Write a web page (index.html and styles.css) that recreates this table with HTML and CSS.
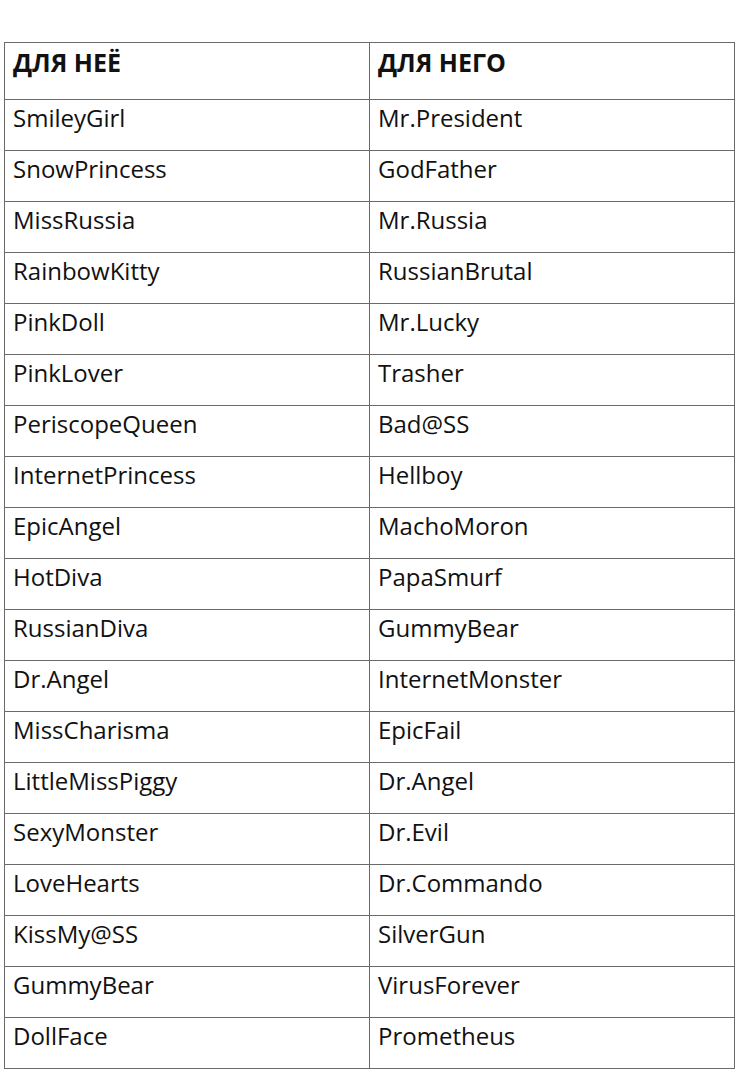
FILE: index.html
```html
<!DOCTYPE html>
<html>
<head>
<meta charset="utf-8">
<link rel="stylesheet" href="styles.css">
</head>
<body>
<table class="names">
  <thead>
    <tr><th>ДЛЯ НЕЁ</th><th>ДЛЯ НЕГО</th></tr>
  </thead>
  <tbody>
    <tr><td>SmileyGirl</td><td>Mr.President</td></tr>
    <tr><td>SnowPrincess</td><td>GodFather</td></tr>
    <tr><td>MissRussia</td><td>Mr.Russia</td></tr>
    <tr><td>RainbowKitty</td><td>RussianBrutal</td></tr>
    <tr><td>PinkDoll</td><td>Mr.Lucky</td></tr>
    <tr><td>PinkLover</td><td>Trasher</td></tr>
    <tr><td>PeriscopeQueen</td><td>Bad@SS</td></tr>
    <tr><td>InternetPrincess</td><td>Hellboy</td></tr>
    <tr><td>EpicAngel</td><td>MachoMoron</td></tr>
    <tr><td>HotDiva</td><td>PapaSmurf</td></tr>
    <tr><td>RussianDiva</td><td>GummyBear</td></tr>
    <tr><td>Dr.Angel</td><td>InternetMonster</td></tr>
    <tr><td>MissCharisma</td><td>EpicFail</td></tr>
    <tr><td>LittleMissPiggy</td><td>Dr.Angel</td></tr>
    <tr><td>SexyMonster</td><td>Dr.Evil</td></tr>
    <tr><td>LoveHearts</td><td>Dr.Commando</td></tr>
    <tr><td>KissMy@SS</td><td>SilverGun</td></tr>
    <tr><td>GummyBear</td><td>VirusForever</td></tr>
    <tr><td>DollFace</td><td>Prometheus</td></tr>
  </tbody>
</table>
</body>
</html>
```
FILE: styles.css
```css
html, body {
  margin: 0;
  padding: 0;
  background: #ffffff;
}
body {
  padding: 42px 0 0 4px;
  font-family: "Open Sans", "Liberation Sans", sans-serif;
  color: #111111;
}
.names {
  border-collapse: collapse;
  width: 731px;
  table-layout: fixed;
}
.names th,
.names td {
  border: 1.5px solid #6a6a6a;
  text-align: left;
  vertical-align: top;
  padding: 0 0 0 8px;
  width: 50%;
  box-sizing: border-box;
}
.names th {
  height: 57px;
  font-size: 25px;
  font-weight: 700;
  line-height: 30px;
  padding-top: 4px;
}
.names td {
  height: 51px;
  font-size: 24px;
  font-weight: 400;
  line-height: 30px;
  padding-top: 3px;
}
```
